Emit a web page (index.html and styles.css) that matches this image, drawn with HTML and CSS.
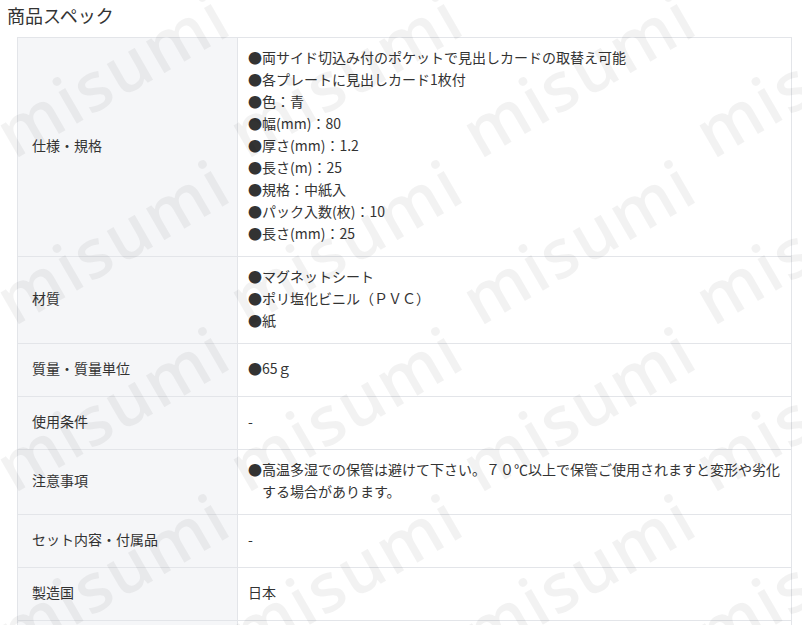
FILE: index.html
```html
<!DOCTYPE html>
<html lang="ja">
<head>
<meta charset="utf-8">
<title>商品スペック</title>
<link rel="stylesheet" href="styles.css">
</head>
<body>
<h2 class="spec-title">商品スペック</h2>
<table class="spec-table">
  <colgroup><col class="col-label"><col class="col-value"></colgroup>
  <tbody>
    <tr>
      <th>仕様・規格</th>
      <td>
        <ul class="bullets">
          <li>●両サイド切込み付のポケットで見出しカードの取替え可能</li>
          <li>●各プレートに見出しカード1枚付</li>
          <li>●色：青</li>
          <li>●幅(mm)：80</li>
          <li>●厚さ(mm)：1.2</li>
          <li>●長さ(m)：25</li>
          <li>●規格：中紙入</li>
          <li>●パック入数(枚)：10</li>
          <li>●長さ(mm)：25</li>
        </ul>
      </td>
    </tr>
    <tr>
      <th>材質</th>
      <td>
        <ul class="bullets">
          <li>●マグネットシート</li>
          <li>●ポリ塩化ビニル（ＰＶＣ）</li>
          <li>●紙</li>
        </ul>
      </td>
    </tr>
    <tr>
      <th>質量・質量単位</th>
      <td><ul class="bullets"><li>●65ｇ</li></ul></td>
    </tr>
    <tr>
      <th>使用条件</th>
      <td>-</td>
    </tr>
    <tr>
      <th>注意事項</th>
      <td><ul class="bullets"><li>●高温多湿での保管は避けて下さい。７０℃以上で保管ご使用されますと変形や劣化する場合があります。</li></ul></td>
    </tr>
    <tr>
      <th>セット内容・付属品</th>
      <td>-</td>
    </tr>
    <tr>
      <th>製造国</th>
      <td>日本</td>
    </tr>
    <tr>
      <th></th>
      <td></td>
    </tr>
  </tbody>
</table>
<svg class="watermark" width="802" height="625" viewBox="0 0 802 625" aria-hidden="true">
  <text x="14" y="160" transform="rotate(-30 14 160)">misumi</text>
  <text x="247" y="160" transform="rotate(-30 247 160)">misumi</text>
  <text x="480" y="160" transform="rotate(-30 480 160)">misumi</text>
  <text x="713" y="160" transform="rotate(-30 713 160)">misumi</text>
  <text x="14" y="327" transform="rotate(-30 14 327)">misumi</text>
  <text x="247" y="327" transform="rotate(-30 247 327)">misumi</text>
  <text x="480" y="327" transform="rotate(-30 480 327)">misumi</text>
  <text x="713" y="327" transform="rotate(-30 713 327)">misumi</text>
  <text x="14" y="494" transform="rotate(-30 14 494)">misumi</text>
  <text x="247" y="494" transform="rotate(-30 247 494)">misumi</text>
  <text x="480" y="494" transform="rotate(-30 480 494)">misumi</text>
  <text x="713" y="494" transform="rotate(-30 713 494)">misumi</text>
  <text x="14" y="661" transform="rotate(-30 14 661)">misumi</text>
  <text x="247" y="661" transform="rotate(-30 247 661)">misumi</text>
  <text x="480" y="661" transform="rotate(-30 480 661)">misumi</text>
  <text x="713" y="661" transform="rotate(-30 713 661)">misumi</text>
</svg>
</body>
</html>
```

FILE: styles.css
```css
html, body {
  overflow: hidden;
}

body {
  margin: 0;
  position: relative;
  height: 625px;
  background: #ffffff;
  color: #333333;
  font-family: "Noto Sans CJK JP", "Noto Sans", sans-serif;
  font-size: 14px;
  line-height: 22px;
}

.spec-title {
  margin: 0 0 7px 0;
  padding-left: 7px;
  font-size: 18px;
  font-weight: normal;
  line-height: 30px;
  color: #333333;
}

.spec-table {
  margin-left: 17px;
  width: 775px;
  border-collapse: collapse;
  table-layout: fixed;
}

.col-label {
  width: 220px;
}

.spec-table th,
.spec-table td {
  border: 1px solid #e3e5e9;
  padding: 8px 10px 12px 10px;
  height: 32px;
  vertical-align: middle;
  text-align: left;
  font-weight: normal;
}

.spec-table th {
  background: #f5f6f8;
  padding-left: 14px;
}

.bullets {
  list-style: none;
  margin: 0;
  padding: 0;
}

.bullets li {
  padding-left: 14px;
  text-indent: -14px;
}

.watermark {
  position: absolute;
  left: 0;
  top: 0;
  pointer-events: none;
}

.watermark text {
  font-family: "Open Sans", "Noto Sans", sans-serif;
  font-weight: 600;
  font-size: 68px;
  letter-spacing: 2px;
  fill: #000000;
  fill-opacity: 0.05;
}
```
